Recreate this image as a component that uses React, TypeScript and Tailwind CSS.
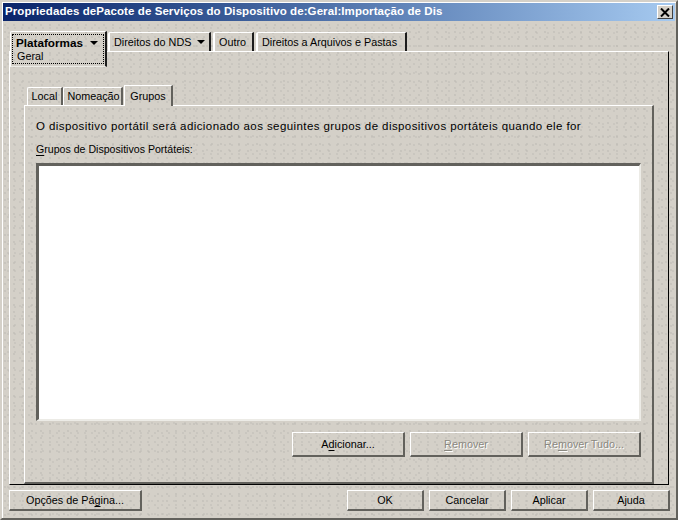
const fontStyle = "font-['Liberation_Sans',Arial,sans-serif]";

function U({ children }: { children: string }) {
  return <span className="underline underline-offset-2">{children}</span>;
}

function Btn({
  children,
  size,
  disabled,
}: {
  children: React.ReactNode;
  size: string;
  disabled?: boolean;
}) {
  return (
    <div
      className={`${size} flex items-center justify-center border-t border-l border-r-2 border-b-2 border-t-white border-l-white border-r-[#62615c] border-b-[#62615c] text-[10.8px] whitespace-nowrap ${
        disabled ? "text-[#8a8880] [text-shadow:1px_1px_0_#ffffff]" : "text-black"
      }`}
    >
      <span>{children}</span>
    </div>
  );
}

function TopTab({ children, size }: { children: React.ReactNode; size: string }) {
  return (
    <div
      className={`${size} h-[19px] mt-px flex items-center gap-[6px] pl-[4px] border-t border-l-2 border-r-2 border-t-white border-l-white border-r-[#1c1c1c] rounded-tl-[2px] text-[10.8px] text-black whitespace-nowrap`}
    >
      {children}
    </div>
  );
}

function Arrow() {
  return <span className="w-0 h-0 border-l-[4px] border-r-[4px] border-t-[4px] border-l-transparent border-r-transparent border-t-black" />;
}

function InnerTab({ children, size }: { children: string; size: string }) {
  return (
    <div
      className={`${size} h-[18px] flex items-center justify-center border-t border-l border-r-2 border-t-white border-l-white border-r-[#62615c] rounded-tl-[2px] text-[10.8px] text-black`}
    >
      {children}
    </div>
  );
}

export default function App() {
  return (
    <div
      className={`${fontStyle} w-[678px] h-[520px] flex flex-col bg-[#d4d0c8] bg-fixed bg-[radial-gradient(circle_at_1px_1px,#bcb9b2_0.65px,transparent_0.75px),radial-gradient(circle_at_1px_1px,#b8b5ae_0.65px,transparent_0.75px),radial-gradient(circle_at_1px_1px,#bebbb4_0.65px,transparent_0.75px)] bg-[length:7px_9px,9px_7px,11px_13px] bg-[position:0_0,4px_3px,8px_6px] border-2 border-t-[#d4d0c8] border-l-[#d4d0c8] border-r-[#62615c] border-b-[#62615c] shadow-[inset_1px_1px_0_#ffffff]`}
    >
      <div className="mx-px mt-px h-[18px] shrink-0 flex items-center justify-between pl-[2px] pr-[2px] bg-gradient-to-r from-[#0a246a] to-[#a6caf0]">
        <span className="font-bold text-[11.5px] tracking-[0.08px] text-white leading-none whitespace-nowrap">
          Propriedades dePacote de Serviços do Dispositivo de:Geral:Importação de Dis
        </span>
        <div className="w-[16px] h-[14px] flex items-center justify-center bg-[#d4d0c8] border-t border-l border-t-white border-l-white border-r border-b border-r-[#404040] border-b-[#404040]">
          <svg width="10" height="9" viewBox="0 0 10 9">
            <path d="M1 0.5 L9 8.5 M9 0.5 L1 8.5" stroke="#000" strokeWidth="2" fill="none" />
          </svg>
        </div>
      </div>

      <div className="flex-1 min-h-0 flex flex-col pl-[7px] pr-[7px] pt-[10px]">
        {/* Top tabs */}
        <div className="h-[20px] shrink-0 flex items-start pl-px relative z-10">
          <div className="w-[97px] h-[36px] mr-px flex flex-col pl-[1px] pt-[2px] border-t border-l border-r-2 border-b border-t-white border-l-white border-r-[#1c1c1c] border-b-[#ecebe6] text-black rounded-tl-[2px] bg-[#d4d0c8] bg-fixed bg-[radial-gradient(circle_at_1px_1px,#bcb9b2_0.65px,transparent_0.75px),radial-gradient(circle_at_1px_1px,#b8b5ae_0.65px,transparent_0.75px),radial-gradient(circle_at_1px_1px,#bebbb4_0.65px,transparent_0.75px)] bg-[length:7px_9px,9px_7px,11px_13px] bg-[position:0_0,4px_3px,8px_6px]">
            <div className="w-[92px] h-[30px] border border-dotted border-black pl-[3px] pt-px">
              <div className="flex items-center gap-[7px] font-bold text-[11.7px] leading-[13px]">
                <span>Plataformas</span>
                <Arrow />
              </div>
              <div className="text-[10.8px] leading-[15px] pl-px">Geral</div>
            </div>
          </div>
          <TopTab size="w-[103px] mr-[2px]">
            <span>Direitos do NDS</span>
            <Arrow />
          </TopTab>
          <TopTab size="w-[41px] mr-[2px]">
            <span>Outro</span>
          </TopTab>
          <TopTab size="w-[151px]">
            <span>Direitos a Arquivos e Pastas</span>
          </TopTab>
        </div>

        {/* Outer panel */}
        <div className="h-[434px] shrink-0 flex flex-col border-t border-l border-r border-b border-t-white border-l-white border-r-black border-b-black pl-[14px] pr-[14px] pt-[33px]">
          <div className="h-[20px] shrink-0 flex items-end pl-[3px] relative z-10">
            <InnerTab size="w-[36px]">Local</InnerTab>
            <InnerTab size="w-[60px] mr-px pl-[2px]">Nomeação</InnerTab>
            <div className="w-[49px] h-[21px] -mb-[1px] flex items-start justify-center pt-[2px] border-t border-l border-r-2 border-t-white border-l-white border-r-[#62615c] text-[10.8px] text-black bg-[#d4d0c8] bg-fixed bg-[radial-gradient(circle_at_1px_1px,#bcb9b2_0.65px,transparent_0.75px),radial-gradient(circle_at_1px_1px,#b8b5ae_0.65px,transparent_0.75px),radial-gradient(circle_at_1px_1px,#bebbb4_0.65px,transparent_0.75px)] bg-[length:7px_9px,9px_7px,11px_13px] bg-[position:0_0,4px_3px,8px_6px]">
              Grupos
            </div>
          </div>
          <div className="flex-1 min-h-0 flex flex-col border-t border-l border-r-2 border-b-2 border-t-white border-l-white border-r-[#62615c] border-b-[#62615c] pl-[11px] pr-[11px] pt-[13px]">
            <div className="h-[14px] text-[11.5px] tracking-[0.42px] leading-[14px] text-black whitespace-nowrap">
              O dispositivo portátil será adicionado aos seguintes grupos de dispositivos portáteis quando ele for
            </div>
            <div className="h-[14px] mt-[9px] text-[10.6px] leading-[14px] text-black">
              <U>G</U>rupos de Dispositivos Portáteis:
            </div>
            <div className="h-[258px] shrink-0 mt-[7px] bg-white border-t-[3px] border-l-[3px] border-r-2 border-b-2 border-t-[#62615c] border-l-[#62615c] border-r-[#ecebe6] border-b-[#ecebe6]" />
            <div className="mt-[11px] flex justify-end gap-[5px]">
              <Btn size="w-[113px] h-[25px]">
                A<U>d</U>icionar...
              </Btn>
              <Btn size="w-[113px] h-[25px]" disabled>
                <U>R</U>emover
              </Btn>
              <Btn size="w-[113px] h-[25px]" disabled>
                Re<U>m</U>over Tudo...
              </Btn>
            </div>
          </div>
        </div>

        {/* Bottom buttons */}
        <div className="mt-[5px] flex gap-[5px]">
          <Btn size="w-[133px] h-[21px]">
            Opções de Pá<U>g</U>ina...
          </Btn>
          <div className="ml-auto -mr-px flex gap-[5px]">
            <Btn size="w-[77px] h-[21px]">OK</Btn>
            <Btn size="w-[77px] h-[21px]">Cancelar</Btn>
            <Btn size="w-[77px] h-[21px]">Aplicar</Btn>
            <Btn size="w-[77px] h-[21px]">Ajuda</Btn>
          </div>
        </div>
      </div>
    </div>
  );
}
